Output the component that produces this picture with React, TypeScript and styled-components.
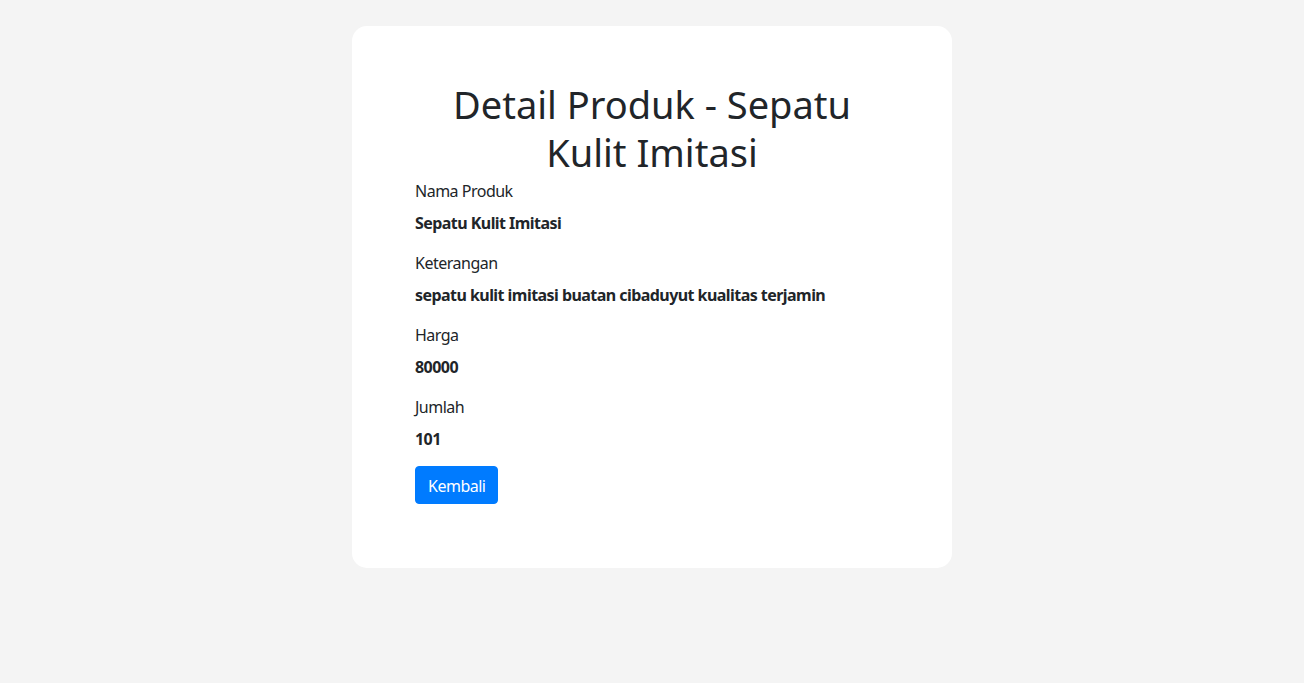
import React from 'react'
import styled, { createGlobalStyle } from 'styled-components'

const GlobalStyle = createGlobalStyle`
  * {
    box-sizing: border-box;
  }

  body {
    margin: 0;
    background: #f4f4f4;
    font-family: "Noto Sans", "Open Sans", sans-serif;
    color: #212529;
    font-size: 16px;
    line-height: 1.5;
  }
`

const Page = styled.div`
  display: flex;
  justify-content: center;
  padding: 26px 0px 0px 0px;
`

const Card = styled.div`
  width: 600px;
  background: #ffffff;
  border-radius: 15px;
  padding: 54px 63px 64px 63px;
`

const Title = styled.h1`
  margin: 0px 0px 2px 0px;
  font-weight: 400;
  font-size: 38px;
  line-height: 48px;
  text-align: center;
  padding: 0px 30px;
`

const Field = styled.div`
  margin: 0px 0px 15px 0px;
`

const Label = styled.div`
  font-size: 16px;
  line-height: 24px;
  letter-spacing: -0.5px;
  padding: 1px 0px 0px 0px;
  margin: 0px 0px 7px 0px;
`

const Value = styled.div`
  font-size: 16px;
  line-height: 24px;
  font-weight: 700;
  letter-spacing: -0.55px;
  padding: 1px 0px 0px 0px;
`

const BackButton = styled.button`
  font-family: inherit;
  font-size: 16px;
  line-height: 24px;
  letter-spacing: -0.5px;
  color: #ffffff;
  background: #007bff;
  border: 1px solid #007bff;
  border-radius: 4px;
  padding: 7px 12px 5px 12px;
  cursor: pointer;
`

const fields = [
  { label: 'Nama Produk', value: 'Sepatu Kulit Imitasi' },
  { label: 'Keterangan', value: 'sepatu kulit imitasi buatan cibaduyut kualitas terjamin' },
  { label: 'Harga', value: '80000' },
  { label: 'Jumlah', value: '101' },
]

const App = () => {
  return (
    <>
      <GlobalStyle />
      <Page>
        <Card>
          <Title>Detail Produk - Sepatu Kulit Imitasi</Title>
          {fields.map((f) => (
            <Field key={f.label}>
              <Label>{f.label}</Label>
              <Value>{f.value}</Value>
            </Field>
          ))}
          <BackButton>Kembali</BackButton>
        </Card>
      </Page>
    </>
  )
}

export default App
